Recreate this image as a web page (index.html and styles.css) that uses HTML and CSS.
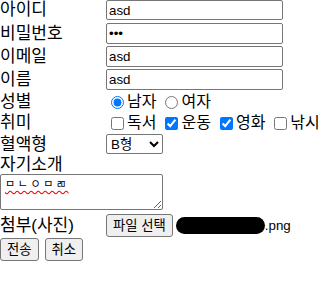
FILE: index.html
```html
<!DOCTYPE html>
<html lang="ko">
<head>
  <meta charset="UTF-8">
  <title>회원가입</title>
  <link rel="stylesheet" href="styles.css">
</head>
<body>
  <form class="join">
    <div class="row first">
      <span class="lbl">아이디</span>
      <input class="txt" type="text" value="asd">
    </div>
    <div class="row">
      <span class="lbl">비밀번호</span>
      <input class="txt" type="password" value="asd">
    </div>
    <div class="row">
      <span class="lbl">이메일</span>
      <input class="txt" type="text" value="asd">
    </div>
    <div class="row">
      <span class="lbl">이름</span>
      <input class="txt" type="text" value="asd">
    </div>
    <div class="row short">
      <span class="lbl">성별</span>
      <span class="opts">
        <label><input type="radio" name="gender" checked>남자</label>
        <label><input type="radio" name="gender">여자</label>
      </span>
    </div>
    <div class="row short">
      <span class="lbl">취미</span>
      <span class="opts">
        <label><input type="checkbox">독서</label>
        <label><input type="checkbox" checked>운동</label>
        <label><input type="checkbox" checked>영화</label>
        <label><input type="checkbox">낚시</label>
      </span>
    </div>
    <div class="row sel">
      <span class="lbl">혈액형</span>
      <select class="blood">
        <option>A형</option>
        <option selected>B형</option>
        <option>O형</option>
        <option>AB형</option>
      </select>
    </div>
    <div class="lbl solo">자기소개</div>
    <textarea class="intro" spellcheck="false">ㅁㄴㅇㅁㄻ</textarea>
    <div class="row file">
      <span class="lbl">첨부(사진)</span>
      <button type="button" class="btn">파일 선택</button>
      <span class="fname"><span class="blot"></span>.png</span>
    </div>
    <div class="actions">
      <button type="submit" class="btn">전송</button>
      <button type="reset" class="btn">취소</button>
    </div>
  </form>
</body>
</html>
```

FILE: styles.css
```css
body {
  margin: 0;
  padding: 0;
  background: #fff;
  color: #000;
  font-family: "Liberation Sans", "Noto Sans CJK KR", sans-serif;
}

/* 한 줄씩 */
.row {
  display: flex;
  align-items: center;
  height: 23px;
}

.row.first {
  height: 22px;
  align-items: flex-start;
}

.row.short { height: 21px; }
.row.sel { height: 22px; }

.lbl {
  width: 106px;
  flex: none;
  font-size: 17px;
  line-height: 19px;
}

.solo { height: 19px; }

.txt {
  box-sizing: border-box;
  width: 177px;
  height: 21px;
  margin: 0;
  padding: 1px 2px;
  border: 1px solid #767676;
  border-radius: 2px;
  font-family: "Liberation Sans", sans-serif;
  font-size: 13.33px;
}

.first .txt { height: 20px; }

.opts {
  display: flex;
  gap: 4px;
  font-size: 16px;
  line-height: 19px;
}

.opts label {
  display: flex;
  align-items: center;
}

.opts input {
  margin: 1px 3px 0 5px;
}

.blood {
  box-sizing: border-box;
  width: 57px;
  height: 20px;
  margin: 0;
  border: 1px solid #767676;
  border-radius: 2px;
  font-family: "Liberation Sans", "Noto Sans CJK KR", sans-serif;
  font-size: 13.33px;
  background: #fff;
}

.intro {
  display: block;
  box-sizing: border-box;
  width: 163px;
  height: 36px;
  margin: 0;
  padding: 3px 4px;
  border: 1px solid #767676;
  border-radius: 2px;
  font-family: "Liberation Mono", "Noto Sans CJK KR", monospace;
  font-size: 11px;
  line-height: 15px;
  letter-spacing: 2.6px;
  text-decoration: underline wavy #e00;
  text-underline-offset: 2px;
}

.row.file {
  height: 25px;
  margin-top: 3px;
}

.btn {
  margin: 0;
  padding: 1px 6px;
  background: #efefef;
  border: 1px solid #767676;
  border-radius: 3px;
  color: #000;
  font-family: "Liberation Sans", "Noto Sans CJK KR", sans-serif;
  font-size: 13.33px;
  line-height: 19px;
}

.fname {
  display: flex;
  align-items: center;
  margin-left: 3px;
  font-family: "Liberation Sans", sans-serif;
  font-size: 13.33px;
}

.blot {
  width: 89px;
  height: 17px;
  background: #000;
  border-radius: 9px;
}

.actions {
  display: flex;
  gap: 6px;
}
```
